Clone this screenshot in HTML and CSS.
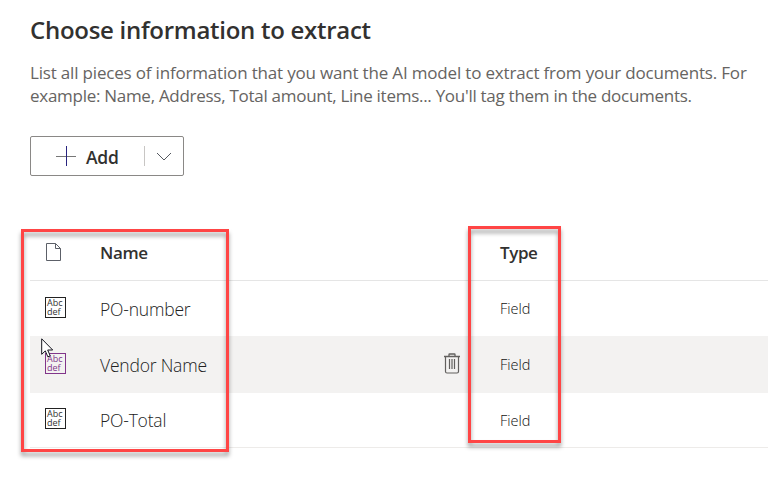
FILE: index.html
```html
<!DOCTYPE html>
<html lang="en">
<head>
<meta charset="utf-8">
<title>Choose information to extract</title>
<link rel="stylesheet" href="styles.css">
</head>
<body>
<main class="page">
  <h1 class="title"><span>Choose information to extract</span></h1>
  <p class="intro"><span class="line-one">List all pieces of information that you want the AI model to extract from your documents. For</span><br><span class="line-two">example: Name, Address, Total amount, Line items... You'll tag them in the documents.</span></p>
  <div class="add-button">
    <button class="add-main" type="button">
      <svg class="plus" viewBox="0 0 20 20"><path d="M0 10.500H20" stroke="#777"/><path d="M10.500 0V20" stroke="#29257f"/></svg>
      <span class="add-label">Add</span>
    </button>
    <button class="add-menu" type="button" aria-label="More options">
      <svg class="chevron" viewBox="0 0 16 9"><path d="M1 1L8 8L15 1" fill="none" stroke="#555960"/></svg>
    </button>
  </div>
  <section class="table">
    <div class="row header">
      <svg class="icon doc" viewBox="0 0 20 20"><path d="M1.500 1.500H10.500L15.500 6.500V18.500H1.500ZM10.500 1.500V6.500H15.500" fill="none" stroke="#5c6068"/></svg>
      <span class="heading name-heading">Name</span>
      <span></span>
      <span class="heading type-heading">Type</span>
    </div>
    <div class="row first">
      <span class="icon field-icon">Abc<br>def</span>
      <span class="name">PO-number</span>
      <span></span>
      <span class="type">Field</span>
    </div>
    <div class="row selected">
      <span class="icon field-icon">Abc<br>def</span>
      <span class="name">Vendor Name</span>
      <svg class="trash" viewBox="0 0 18 21" fill="none" stroke="#62605e"><path d="M1 3.500H17M6 3V1.500Q6 1 6.500 1H11.500Q12 1 12 1.500V3" stroke-width="1.3"/><path d="M2.500 4V18.500Q2.500 20 4 20H14Q15.500 20 15.500 18.500V4" stroke-width="1.2"/><path d="M6.500 6V16M9 6V16M11.500 6V16" stroke-width="1.2"/></svg>
      <span class="type">Field</span>
    </div>
    <div class="row last">
      <span class="icon field-icon">Abc<br>def</span>
      <span class="name">PO-Total</span>
      <span></span>
      <span class="type">Field</span>
    </div>
  </section>
</main>
<div class="callout callout-name"></div>
<div class="callout callout-type"></div>
<svg class="cursor" viewBox="0 0 13 20"><path d="M.7 .8V16.300L4.300 12.900L6.800 18.800L9.200 17.800L6.700 12H11.700Z" fill="#fff" stroke="#15151f"/></svg>
</body>
</html>
```
FILE: styles.css
```css
* { box-sizing: border-box; }
body {
  margin: 0;
  width: 768px;
  height: 488px;
  overflow: hidden;
  background: #fff;
  color: #323130;
  font-family: "Open Sans", "Noto Sans", sans-serif;
}
.page { padding: 14px 0 0 30px; }
.title {
  margin: 0;
  font-size: 24px;
  line-height: 32px;
  font-weight: 600;
  letter-spacing: -0.28px;
  white-space: nowrap;
}
.intro {
  margin: 15px 0 0;
  font-size: 17px;
  line-height: 23px;
  color: #666462;
  white-space: nowrap;
}
.line-one { letter-spacing: -0.18px; }
.line-two { letter-spacing: -0.28px; }
.add-button {
  display: flex;
  align-items: center;
  width: 154px;
  height: 40px;
  margin-top: 29px;
  border: 1px solid #8a8886;
  border-radius: 2px;
}
button {
  margin: 0;
  border: 0;
  background: none;
  color: inherit;
  font-family: inherit;
}
.add-main {
  display: flex;
  align-items: center;
  width: 114px;
  height: 20px;
  padding: 0 0 0 25px;
  border-right: 1px solid #c8c6c4;
}
.plus { width: 20px; height: 20px; }
.add-label {
  margin: 1px 0 0 10px;
  font-size: 17.5px;
  line-height: 24px;
  font-weight: 600;
  letter-spacing: -0.2px;
}
.add-menu { display: flex; padding: 0 0 0 11px; }
.chevron { width: 16px; height: 9px; }
.table { margin-top: 49px; }
.row {
  display: grid;
  grid-template-columns: 70px 343px 57px 1fr;
  align-items: center;
  height: 56px;
}
.header { border-bottom: 1px solid #e5e5e5; }
.header .doc { margin-bottom: 2px; }
.first { height: 55px; }
.selected { height: 57px; background: #f3f2f1; }
.last { height: 55px; border-bottom: 1px solid #edebe9; }
.icon { margin-left: 15px; }
.doc { width: 20px; height: 20px; }
.heading { font-size: 17px; font-weight: 600; letter-spacing: -0.4px; }
.field-icon {
  width: 21px;
  height: 21px;
  padding: 0 0 0 1px;
  overflow: hidden;
  border: 1px solid #222;
  color: #333;
  font-size: 9px;
  line-height: 9px;
  margin-bottom: 3px;
}
.selected .field-icon { border-color: #81358a; color: #81358a; }
.name { color: #222; font-size: 17.5px; line-height: 24px; font-weight: 300; letter-spacing: -0.2px; }
.last .name { margin-top: -1px; }
.type { color: #111; font-size: 14.5px; font-weight: 300; letter-spacing: 0; }
.trash { width: 18px; height: 21px; margin-bottom: 2px; }
.callout {
  position: absolute;
  border: 3px solid #ff4545;
  filter: drop-shadow(0 4px 2px rgba(0, 0, 0, .38));
}
.callout-name { left: 21px; top: 229px; width: 208px; height: 223px; }
.callout-type { left: 468px; top: 226px; width: 93px; height: 217px; }
.cursor { position: absolute; left: 41px; top: 338px; width: 13px; height: 20px; }
```
